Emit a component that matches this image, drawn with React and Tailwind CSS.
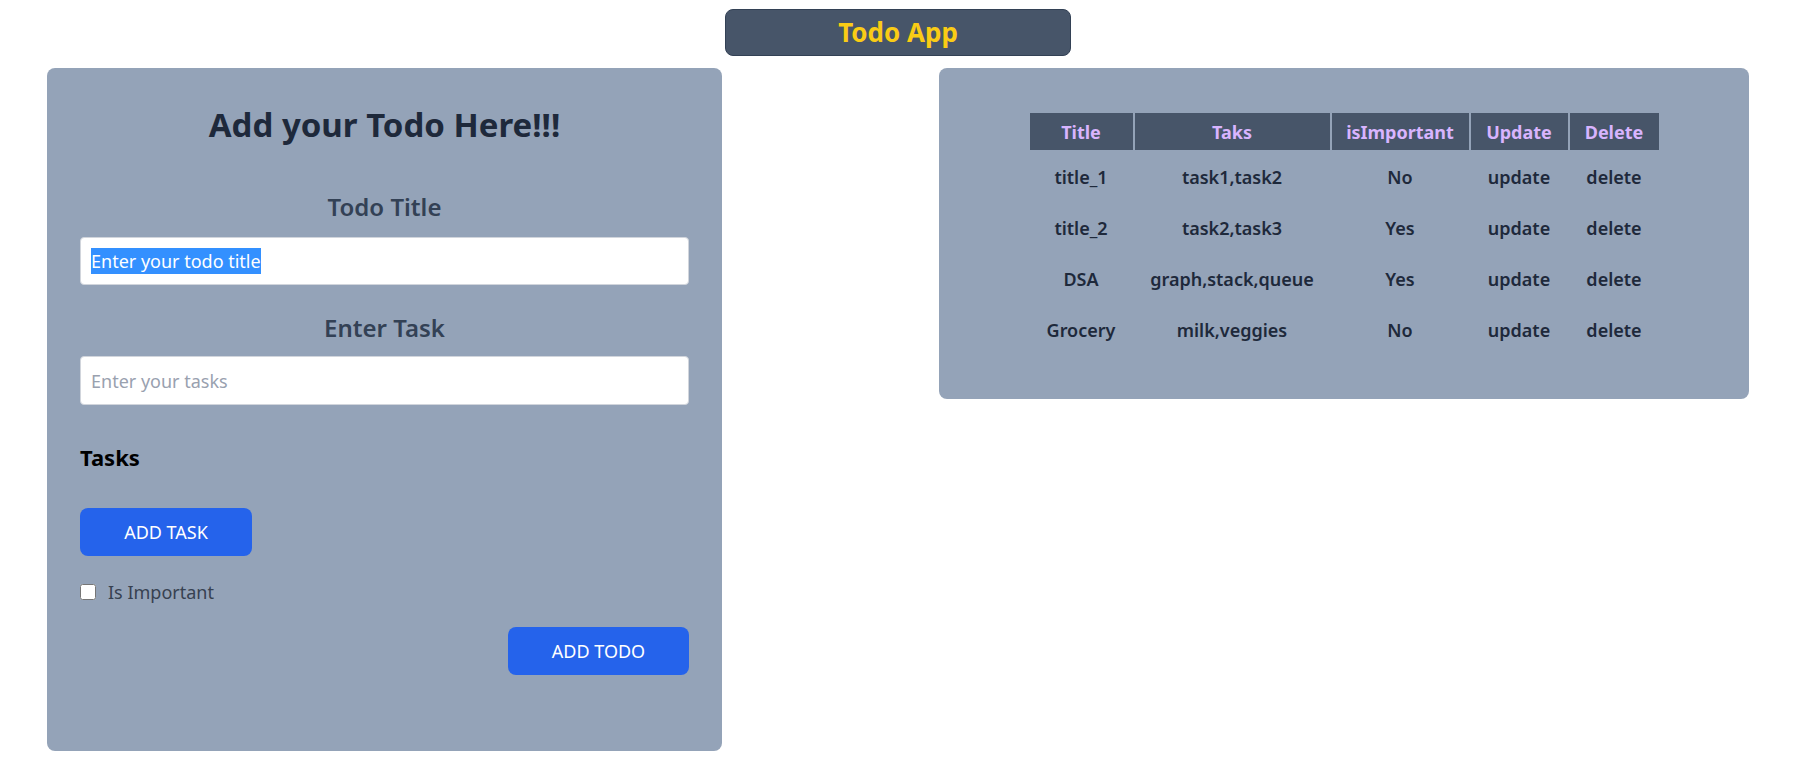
import React from "react";

const todos = [
  { title: "title_1", tasks: "task1,task2", important: "No" },
  { title: "title_2", tasks: "task2,task3", important: "Yes" },
  { title: "DSA", tasks: "graph,stack,queue", important: "Yes" },
  { title: "Grocery", tasks: "milk,veggies", important: "No" },
];

function AddTodoCard() {
  return (
    <div className="w-[675px] h-[683px] shrink-0 rounded-lg bg-[#94a3b8] px-[33px] pt-[39px] flex flex-col">
      <h1 className="text-center text-[33px] leading-[36px] font-bold text-[#1e293b]">Add your Todo Here!!!</h1>

      <div className="mt-[50px] text-center text-2xl leading-7 font-semibold text-[#334155]">Todo Title</div>
      <div className="mt-[16px] h-[48px] rounded bg-white border border-gray-300 flex items-center px-[10px]">
        <span className="bg-[#3390ff] text-white text-lg leading-[26px]">Enter your todo title</span>
      </div>

      <div className="mt-[29px] text-center text-2xl leading-7 font-semibold text-[#334155]">Enter Task</div>
      <input
        className="mt-[14px] h-[49px] rounded bg-white border border-gray-300 px-[10px] text-lg outline-none placeholder:text-gray-400"
        placeholder="Enter your tasks"
      />

      <div className="mt-[38px] text-[22px] leading-7 font-bold text-black">Tasks</div>

      <button className="mt-[37px] w-[172px] h-[48px] rounded-lg bg-[#2563eb] text-white text-lg">ADD TASK</button>

      <label className="mt-[24px] flex items-center gap-[12px] text-lg leading-6 text-[#374151]">
        <input type="checkbox" className="w-[16px] h-[16px]" />
        Is Important
      </label>

      <button className="mt-[23px] self-end w-[181px] h-[48px] rounded-lg bg-[#2563eb] text-white text-lg">ADD TODO</button>
    </div>
  );
}

function TodoTable() {
  return (
    <div className="w-[810px] shrink-0 ml-[217px] rounded-lg bg-[#94a3b8] pt-[43px] pb-[43px]">
      <table className="mx-auto border-separate border-spacing-[2px] text-lg">
        <thead>
          <tr className="h-[37px] text-[#d8b4fe] font-bold">
            <th className="w-[103px] bg-[#475569] px-2 font-bold">Title</th>
            <th className="w-[195px] bg-[#475569] px-2 font-bold">Taks</th>
            <th className="w-[137px] bg-[#475569] px-2 font-bold">isImportant</th>
            <th className="w-[97px] bg-[#475569] px-2 font-bold">Update</th>
            <th className="w-[89px] bg-[#475569] px-2 font-bold">Delete</th>
          </tr>
        </thead>
        <tbody>
          {todos.map((t) => (
            <tr key={t.title} className="h-[49px] text-center font-semibold text-[#1e293b]">
              <td className="px-2">{t.title}</td>
              <td className="px-2">{t.tasks}</td>
              <td className="px-2">{t.important}</td>
              <td className="px-2">update</td>
              <td className="px-2">delete</td>
            </tr>
          ))}
        </tbody>
      </table>
    </div>
  );
}

export default function App() {
  return (
    <div className="min-h-screen bg-white font-['Noto_Sans',sans-serif]">
      <div className="flex justify-center pt-[9px] pr-[13px]">
        <div className="w-[346px] h-[47px] rounded-lg bg-[#475569] border border-[#334155] flex items-center justify-center">
          <span className="text-[26px] font-bold text-[#facc15]">Todo App</span>
        </div>
      </div>
      <div className="flex items-start mt-[12px] pl-[47px]">
        <AddTodoCard />
        <TodoTable />
      </div>
    </div>
  );
}
